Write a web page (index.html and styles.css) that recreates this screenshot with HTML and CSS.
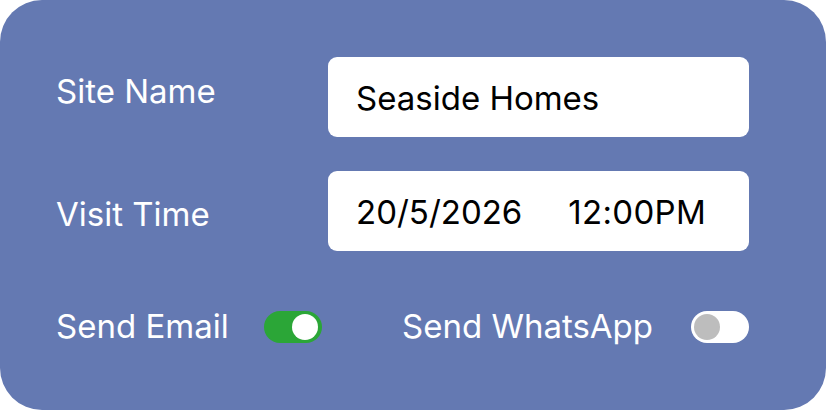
FILE: index.html
```html
<!DOCTYPE html>
<html>
<head>
<meta charset="utf-8">
<link rel="stylesheet" href="styles.css">
</head>
<body>
<div class="card">
  <div class="row">
    <div class="label label-1">Site Name</div>
    <div class="field"><span class="value">Seaside Homes</span></div>
  </div>
  <div class="row row-2">
    <div class="label label-2">Visit Time</div>
    <div class="field"><span class="value">20/5/2026</span><span class="value time">12:00PM</span></div>
  </div>
  <div class="toggles">
    <div class="label">Send Email</div>
    <div class="toggle on"><span class="knob"></span></div>
    <div></div>
    <div class="label">Send WhatsApp</div>
    <div class="toggle off"><span class="knob"></span></div>
  </div>
</div>
</body>
</html>
```
FILE: styles.css
```css
html, body {
  margin: 0;
  padding: 0;
  background: #ffffff;
}
body {
  font-family: "Inter", "Liberation Sans", sans-serif;
}
.card {
  width: 826px;
  height: 410px;
  box-sizing: border-box;
  background: #6479b2;
  border-radius: 42px;
  padding: 57px 77px 0 56px;
}
.row {
  display: flex;
  align-items: center;
  height: 80px;
}
.row-2 {
  margin-top: 34px;
}
.label {
  color: #ffffff;
  font-size: 33px;
  line-height: 34px;
}
.row .label {
  width: 272px;
  flex: none;
}
.label-1 {
  margin-top: -12px;
}
.label-2 {
  margin-top: 5px;
}
.field {
  flex: 1;
  height: 80px;
  background: #ffffff;
  border-radius: 9px;
  display: flex;
  align-items: center;
  padding-left: 28px;
  box-sizing: border-box;
}
.value {
  color: #000000;
  font-size: 33px;
  line-height: 34px;
  margin-top: 2px;
}
.time {
  margin-left: 46px;
  letter-spacing: 0.3px;
}
.toggles {
  margin-top: 60px;
  display: grid;
  grid-template-columns: 208px 58px 80px 1fr 58px;
  align-items: center;
  height: 32px;
}
.toggles .label {
  margin-top: -3px;
}
.toggle {
  width: 58px;
  height: 32px;
  border-radius: 16px;
  display: flex;
  align-items: center;
  box-sizing: border-box;
}
.toggle.on {
  background: #2ba637;
  justify-content: flex-end;
  padding-right: 4px;
}
.toggle.off {
  background: #ffffff;
  padding-left: 3px;
}
.knob {
  width: 26px;
  height: 26px;
  border-radius: 50%;
}
.on .knob {
  background: #ffffff;
}
.off .knob {
  background: #bdbdbd;
}
```
